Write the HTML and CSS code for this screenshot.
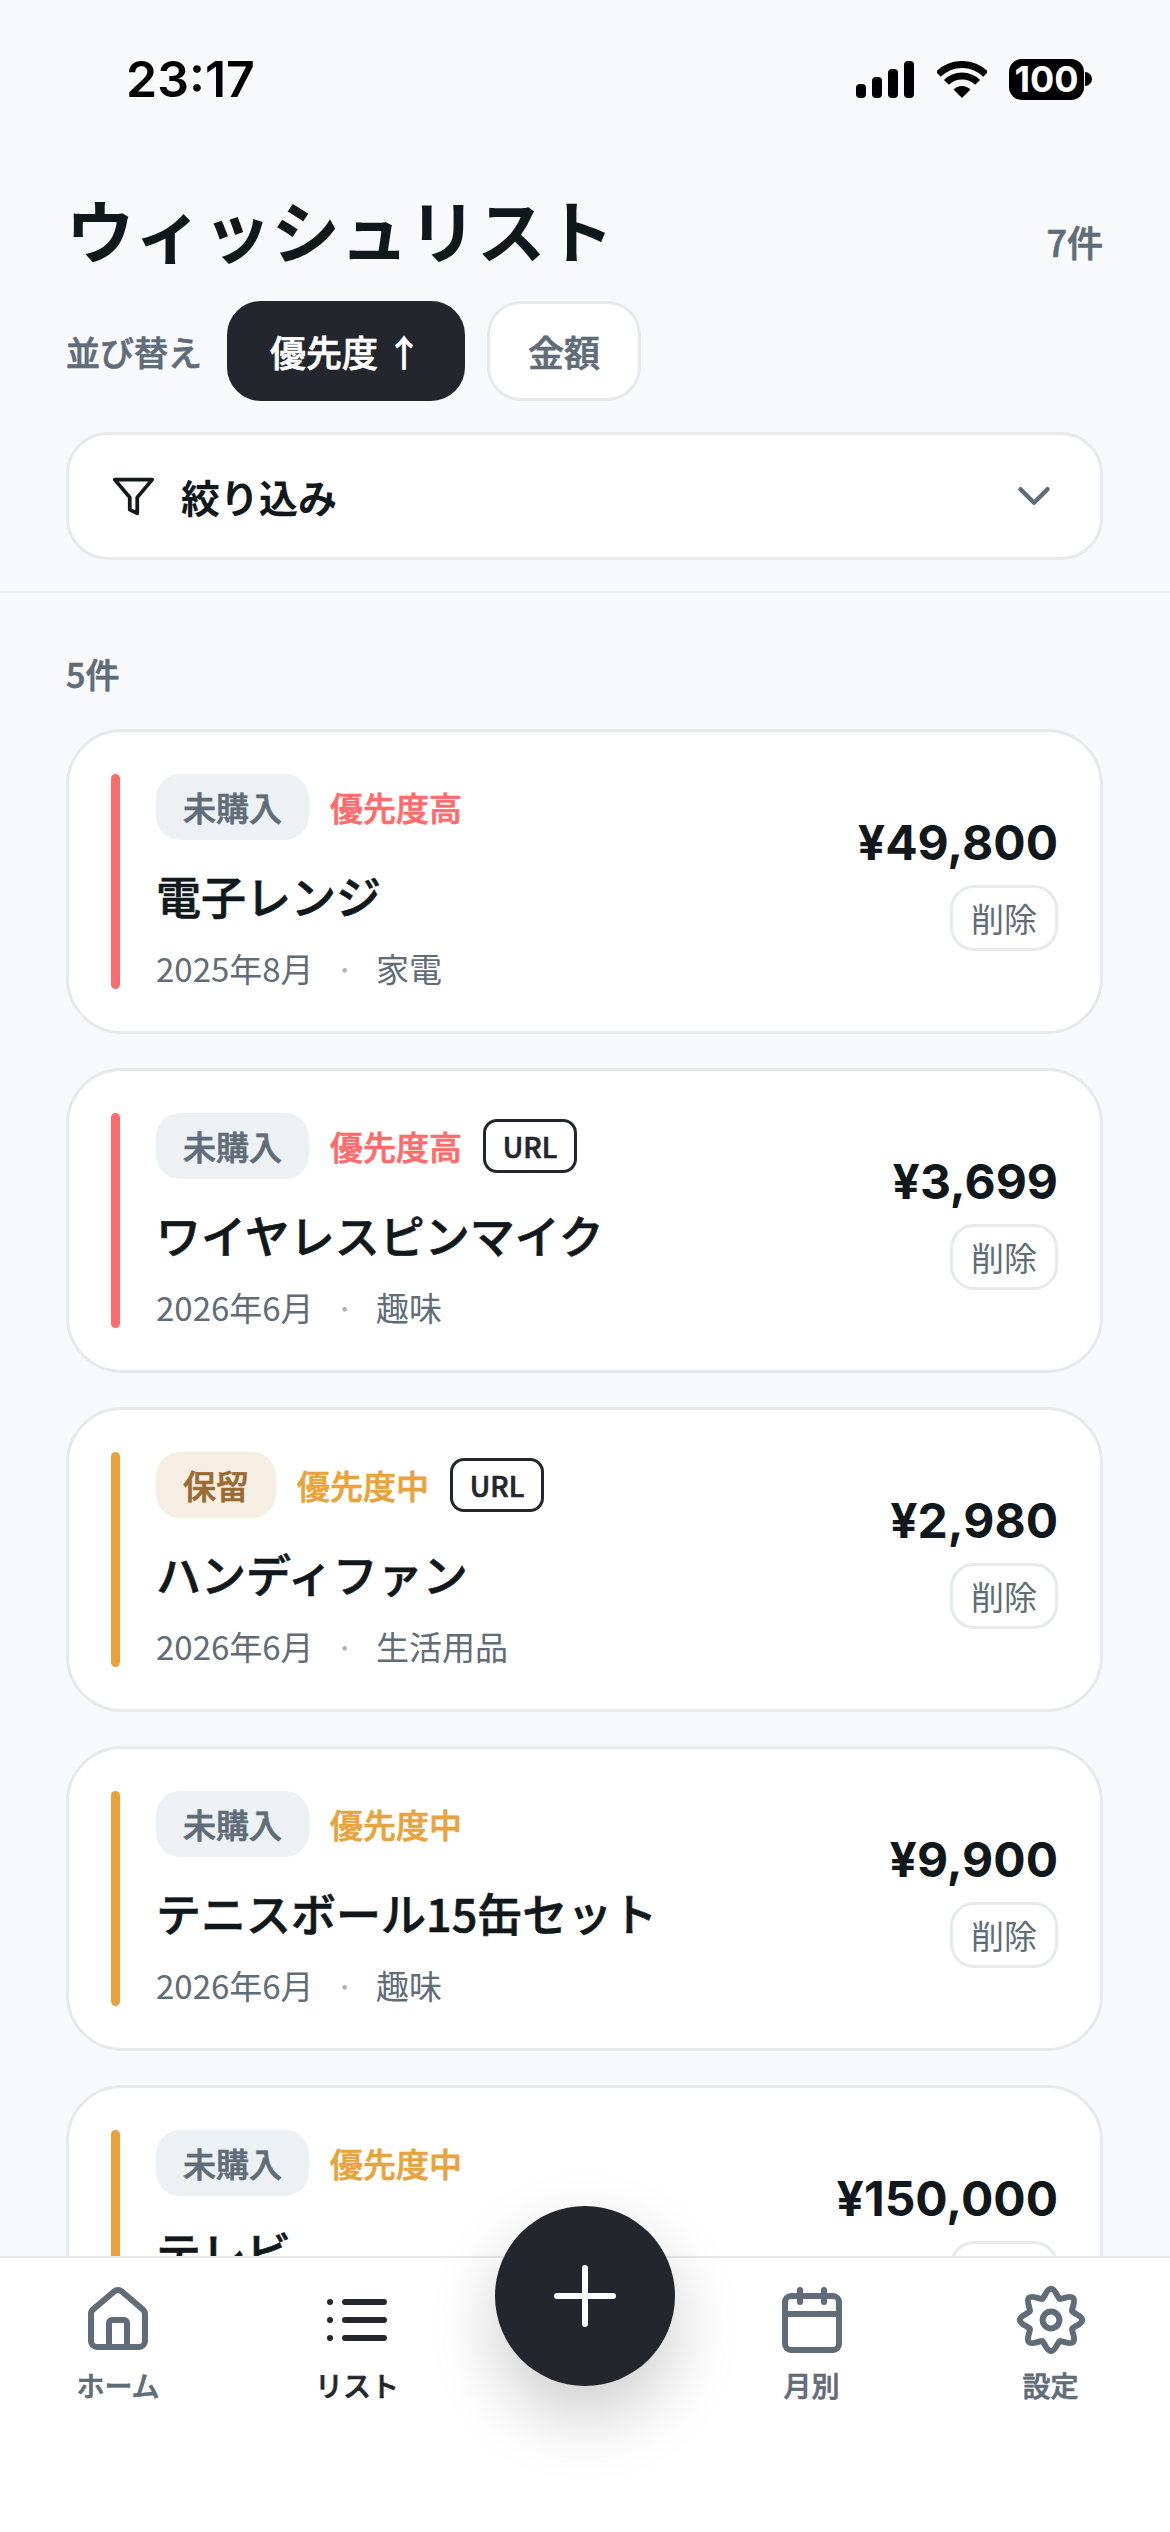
FILE: index.html
```html
<!DOCTYPE html>
<html lang="ja">
<head>
    <meta charset="UTF-8">
    <meta name="viewport" content="width=device-width, initial-scale=1.0">
    <title>ウィッシュリスト</title>
    <link rel="stylesheet" href="styles.css">
</head>
<body>
    <div id="phone">
        <!-- Status bar -->
        <div class="status-bar">
            <span class="time">23:17</span>
            <div class="status-icons">
                <svg width="58" height="37" viewBox="0 0 58 37" fill="#000">
                    <rect x="0" y="23" width="10" height="14" rx="4"/>
                    <rect x="16" y="16" width="10" height="21" rx="4"/>
                    <rect x="32" y="8" width="10" height="29" rx="4"/>
                    <rect x="48" y="0" width="10" height="37" rx="4"/>
                </svg>
                <svg class="wifi" width="50" height="37" viewBox="0 0 50 37">
                    <path d="M25 37L16.5 28.5A12 12 0 0 1 33.5 28.5Z" fill="#000"/>
                    <path d="M9.4 21.4A22 22 0 0 1 40.6 21.4" fill="none" stroke="#000" stroke-width="7"/>
                    <path d="M1.3 13.3A33.5 33.5 0 0 1 48.7 13.3" fill="none" stroke="#000" stroke-width="7"/>
                </svg>
                <div class="battery">
                    <span class="battery-level">100</span>
                    <span class="battery-cap"></span>
                </div>
            </div>
        </div>

        <!-- Header -->
        <div class="header">
            <div class="title-row">
                <h1>ウィッシュリスト</h1>
                <span class="total">7件</span>
            </div>
            <div class="sort-row">
                <span class="sort-label">並び替え</span>
                <span class="sort-btn active">優先度 ↑</span>
                <span class="sort-btn">金額</span>
            </div>
            <div class="filter">
                <svg width="45" height="45" viewBox="0 0 24 24" fill="none" stroke="#11181c" stroke-width="2" stroke-linejoin="round"><polygon points="22 3 2 3 10 12.46 10 19 14 21 14 12.46 22 3"/></svg>
                <span class="filter-label">絞り込み</span>
                <svg class="chevron" width="54" height="54" viewBox="0 0 24 24" fill="none" stroke="#606c78" stroke-width="2" stroke-linecap="round" stroke-linejoin="round"><path d="M6 9l6 6 6-6"/></svg>
            </div>
        </div>

        <!-- List -->
        <div class="content">
            <div class="count">5件</div>

            <div class="card">
                <div class="bar high"></div>
                <div class="info">
                    <div class="tags">
                        <span class="state">未購入</span>
                        <span class="priority high">優先度高</span>
                    </div>
                    <div class="name">電子レンジ</div>
                    <div class="meta"><span>2025年8月</span><span class="dot">·</span><span>家電</span></div>
                </div>
                <div class="side">
                    <div class="price">¥49,800</div>
                    <span class="delete">削除</span>
                </div>
            </div>

            <div class="card">
                <div class="bar high"></div>
                <div class="info">
                    <div class="tags">
                        <span class="state">未購入</span>
                        <span class="priority high">優先度高</span>
                        <span class="url">URL</span>
                    </div>
                    <div class="name">ワイヤレスピンマイク</div>
                    <div class="meta"><span>2026年6月</span><span class="dot">·</span><span>趣味</span></div>
                </div>
                <div class="side">
                    <div class="price">¥3,699</div>
                    <span class="delete">削除</span>
                </div>
            </div>

            <div class="card">
                <div class="bar mid"></div>
                <div class="info">
                    <div class="tags">
                        <span class="state hold">保留</span>
                        <span class="priority mid">優先度中</span>
                        <span class="url">URL</span>
                    </div>
                    <div class="name">ハンディファン</div>
                    <div class="meta"><span>2026年6月</span><span class="dot">·</span><span>生活用品</span></div>
                </div>
                <div class="side">
                    <div class="price">¥2,980</div>
                    <span class="delete">削除</span>
                </div>
            </div>

            <div class="card">
                <div class="bar mid"></div>
                <div class="info">
                    <div class="tags">
                        <span class="state">未購入</span>
                        <span class="priority mid">優先度中</span>
                    </div>
                    <div class="name">テニスボール15缶セット</div>
                    <div class="meta"><span>2026年6月</span><span class="dot">·</span><span>趣味</span></div>
                </div>
                <div class="side">
                    <div class="price">¥9,900</div>
                    <span class="delete">削除</span>
                </div>
            </div>

            <div class="card">
                <div class="bar mid"></div>
                <div class="info">
                    <div class="tags">
                        <span class="state">未購入</span>
                        <span class="priority mid">優先度中</span>
                    </div>
                    <div class="name">テレビ</div>
                    <div class="meta"><span>2026年6月</span><span class="dot">·</span><span>家電</span></div>
                </div>
                <div class="side">
                    <div class="price">¥150,000</div>
                    <span class="delete">削除</span>
                </div>
            </div>
        </div>

        <!-- Bottom nav -->
        <div class="nav">
            <div class="nav-item">
                <svg width="72" height="72" viewBox="0 0 24 24" fill="none" stroke="#606c78" stroke-width="2" stroke-linecap="round" stroke-linejoin="round">
                    <path d="M15 21v-8a1 1 0 0 0-1-1h-4a1 1 0 0 0-1 1v8"/>
                    <path d="M3 10a2 2 0 0 1 .709-1.528l7-5.999a2 2 0 0 1 2.582 0l7 5.999A2 2 0 0 1 21 10v9a2 2 0 0 1-2 2H5a2 2 0 0 1-2-2z"/>
                </svg>
                <span>ホーム</span>
            </div>
            <div class="nav-item current">
                <svg width="72" height="72" viewBox="0 0 24 24" fill="none" stroke="#23262d" stroke-width="2" stroke-linecap="round" stroke-linejoin="round">
                    <path d="M3 6h.01M3 12h.01M3 18h.01M8 6h13M8 12h13M8 18h13"/>
                </svg>
                <span>リスト</span>
            </div>
            <div></div>
            <div class="nav-item">
                <svg width="72" height="72" viewBox="0 0 24 24" fill="none" stroke="#606c78" stroke-width="2" stroke-linecap="round" stroke-linejoin="round">
                    <path d="M8 2v4M16 2v4M3 10h18"/>
                    <rect x="3" y="4" width="18" height="18" rx="2"/>
                </svg>
                <span>月別</span>
            </div>
            <div class="nav-item">
                <svg width="72" height="72" viewBox="0 0 24 24" fill="none" stroke="#606c78" stroke-width="2" stroke-linecap="round" stroke-linejoin="round">
                    <defs><path id="lobe" d="M9.05 4.89C9.88 4.55 10.5 1.6 12 1.6S14.12 4.55 14.95 4.89"/></defs>
                    <use href="#lobe"/>
                    <use href="#lobe" transform="rotate(45 12 12)"/>
                    <use href="#lobe" transform="rotate(90 12 12)"/>
                    <use href="#lobe" transform="rotate(135 12 12)"/>
                    <use href="#lobe" transform="rotate(180 12 12)"/>
                    <use href="#lobe" transform="rotate(225 12 12)"/>
                    <use href="#lobe" transform="rotate(270 12 12)"/>
                    <use href="#lobe" transform="rotate(315 12 12)"/>
                    <circle cx="12" cy="12" r="2.8"/>
                </svg>
                <span>設定</span>
            </div>
            <div class="fab">
                <svg width="72" height="72" viewBox="0 0 72 72" fill="none" stroke="#fff" stroke-width="6" stroke-linecap="round"><path d="M36 8v56M8 36h56"/></svg>
            </div>
        </div>
    </div>
</body>
</html>
```

FILE: styles.css
```css
* {
    box-sizing: border-box;
    font-family: "Noto Sans CJK JP", "Noto Sans", sans-serif;
}

html, body {
    margin: 0;
    padding: 0;
}

#phone {
    display: flex;
    flex-direction: column;
    width: 1170px;
    height: 2532px;
    overflow: hidden;
    background-color: #f8f9fb;
}

/* the CJK font has no 600 weight, so thicken the medium one a little */
.total, .count, .sort-label, .sort-btn, .state, .priority, .url, .name, .nav-item {
    font-weight: 500;
    -webkit-text-stroke: 0.7px;
}

.status-bar {
    display: flex;
    justify-content: space-between;
    align-items: center;
    height: 158px;
    padding: 0 78px 0 126px;
    flex-shrink: 0;
}

.time {
    font-family: "Inter", sans-serif;
    font-size: 50px;
    font-weight: 600;
    color: #000;
}

.status-icons {
    display: flex;
    align-items: center;
    gap: 23px;
}

.wifi {
    margin-right: -1px;
}

.battery {
    display: flex;
    align-items: center;
}

.battery-level {
    display: flex;
    align-items: center;
    justify-content: center;
    width: 75px;
    height: 41px;
    border-radius: 13px;
    background-color: #000;
    color: #fff;
    font-family: "Inter", sans-serif;
    font-size: 36px;
    font-weight: 700;
}

.battery-cap {
    width: 7px;
    height: 14px;
    margin-left: 1px;
    background-color: #000;
    border-radius: 0 7px 7px 0;
}

.header {
    padding: 24px 67px 31px 66px;
    border-bottom: 2px solid #e9edf0;
    flex-shrink: 0;
}

.title-row {
    display: flex;
    justify-content: space-between;
    align-items: center;
}

h1 {
    margin: 0;
    padding-bottom: 6px;
    font-size: 68.5px;
    line-height: 94px;
    font-weight: 700;
    color: #11181c;
}

.total {
    margin-top: 18px;
    font-size: 36px;
    color: #606c78;
}

.sort-row {
    display: flex;
    align-items: center;
    gap: 22px;
    margin-top: 19px;
}

.sort-label {
    margin-right: 3px;
    font-size: 34px;
    color: #606c78;
}

.sort-btn {
    display: flex;
    align-items: center;
    height: 100px;
    padding: 0 38px;
    border: 3px solid #e6eaed;
    border-radius: 34px;
    background-color: #fff;
    font-size: 36px;
    color: #606c78;
}

.sort-btn.active {
    padding: 0 40px;
    border-color: #23262d;
    background-color: #23262d;
    color: #fff;
}

.filter {
    display: flex;
    align-items: center;
    height: 128px;
    margin-top: 31px;
    padding: 0 39px 0 42px;
    border: 3px solid #e6eaed;
    border-radius: 42px;
    background-color: #fff;
}

.filter-label {
    margin-left: 25px;
    font-size: 39px;
    font-weight: 700;
    color: #11181c;
}

.chevron {
    margin-left: auto;
}

.content {
    flex: 1;
    min-height: 0;
    overflow: hidden;
    padding: 56px 67px 0 66px;
}

.count {
    margin-bottom: 30px;
    font-size: 34px;
    line-height: 50px;
    color: #606c78;
}

.card {
    display: flex;
    align-items: stretch;
    height: 305px;
    margin-bottom: 34px;
    padding: 42px;
    border: 3px solid #e6eaed;
    border-radius: 56px;
    background-color: #fff;
}

.bar {
    width: 9px;
    margin-right: 36px;
    border-radius: 5px;
}

.bar.high {
    background-color: #ff6b6b;
}

.bar.mid {
    background-color: #e8a33d;
}

.info {
    flex: 1;
}

.tags {
    display: flex;
    align-items: center;
    gap: 21px;
    height: 66px;
}

.state {
    display: flex;
    align-items: center;
    height: 66px;
    padding: 0 27px;
    border-radius: 24px;
    background-color: #eef1f4;
    font-size: 33px;
    color: #606c78;
}

.state.hold {
    background-color: #f6eee3;
    color: #9a6a33;
}

.priority {
    font-size: 33px;
}

.priority.high {
    color: #ff6b6b;
}

.priority.mid {
    color: #e8a33d;
}

.url {
    display: flex;
    align-items: center;
    justify-content: center;
    width: 94px;
    height: 54px;
    border: 3px solid #23262d;
    border-radius: 14px;
    font-size: 28px;
    color: #23262d;
}

.name {
    margin-top: 26px;
    font-size: 45px;
    line-height: 60px;
    color: #11181c;
}

.meta {
    display: flex;
    gap: 22px;
    margin-top: 22px;
    font-size: 33px;
    line-height: 40px;
    color: #606c78;
}

.dot {
    color: #a9b2ba;
}

.side {
    display: flex;
    flex-direction: column;
    align-items: flex-end;
    justify-content: center;
    gap: 9px;
    padding-bottom: 3px;
}

.price {
    font-family: "Inter", sans-serif;
    font-size: 48px;
    line-height: 66px;
    font-weight: 700;
    color: #11181c;
}

.delete {
    display: flex;
    align-items: center;
    height: 66px;
    padding: 0 18px;
    border: 3px solid #e6eaed;
    border-radius: 24px;
    font-size: 33px;
    color: #606c78;
}

.nav {
    position: relative;
    display: grid;
    grid-template-columns: 236px 242px 214px 239px 239px;
    height: 276px;
    padding-top: 26px;
    border-top: 2px solid #e6eaed;
    background-color: #fff;
    flex-shrink: 0;
}

.nav-item {
    display: flex;
    flex-direction: column;
    align-items: center;
    gap: 9px;
    font-size: 28px;
    line-height: 40px;
    color: #606c78;
}

.nav-item.current {
    color: #23262d;
}

.fab {
    position: absolute;
    top: -52px;
    left: 495px;
    display: flex;
    align-items: center;
    justify-content: center;
    width: 180px;
    height: 180px;
    border-radius: 50%;
    background-color: #23262d;
    box-shadow: 0 30px 70px rgba(0, 0, 0, 0.2);
}
```
